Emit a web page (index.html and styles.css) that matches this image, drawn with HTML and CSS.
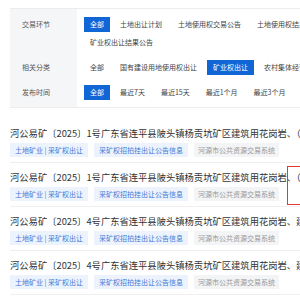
FILE: index.html
```html
<!DOCTYPE html>
<html lang="zh-CN">
<head>
<meta charset="utf-8">
<link rel="stylesheet" href="styles.css">
</head>
<body>
<div class="page">
  <div class="filter">
    <div class="frow first">
      <div class="flabel">交易环节</div>
      <div class="fopts">
        <span class="opt on">全部</span>
        <span class="opt">土地出让计划</span>
        <span class="opt">土地使用权交易公告</span>
        <span class="opt">土地使用权结果公示</span>
        <span class="opt">矿业权出让公告</span>
        <span class="opt">矿业权出让结果公告</span>
      </div>
    </div>
    <div class="frow">
      <div class="flabel">相关分类</div>
      <div class="fopts">
        <span class="opt">全部</span>
        <span class="opt">国有建设用地使用权出让</span>
        <span class="opt on">矿业权出让</span>
        <span class="opt">农村集体经营性建设用地</span>
      </div>
    </div>
    <div class="frow last">
      <div class="flabel">发布时间</div>
      <div class="fopts">
        <span class="opt on">全部</span>
        <span class="opt">最近7天</span>
        <span class="opt">最近15天</span>
        <span class="opt">最近1个月</span>
        <span class="opt">最近3个月</span>
      </div>
    </div>
  </div>

  <ul class="list">
    <li class="item">
      <div class="title">河公易矿〔2025〕1号广东省连平县陂头镇杨贡坑矿区建筑用花岗岩、（建筑用砂岩）采矿权出让公告</div>
      <div class="tags"><span class="tag blue">土地矿业 | 采矿权出让</span><span class="tag blue">采矿权招拍挂出让公告信息</span><span class="tag grey">河源市公共资源交易系统</span></div>
    </li>
    <li class="item">
      <div class="title">河公易矿〔2025〕1号广东省连平县陂头镇杨贡坑矿区建筑用花岗岩、（调整）采矿权出让公告</div>
      <div class="tags"><span class="tag blue">土地矿业 | 采矿权出让</span><span class="tag blue">采矿权招拍挂出让公告信息</span><span class="tag grey">河源市公共资源交易系统</span></div>
      <span class="mark"></span>
    </li>
    <li class="item">
      <div class="title">河公易矿〔2025〕4号广东省连平县陂头镇杨贡坑矿区建筑用花岗岩、建筑用砂岩采矿权出让公告</div>
      <div class="tags"><span class="tag blue">土地矿业 | 采矿权出让</span><span class="tag blue">采矿权招拍挂出让公告信息</span><span class="tag grey">河源市公共资源交易系统</span></div>
    </li>
    <li class="item">
      <div class="title">河公易矿〔2025〕4号广东省连平县陂头镇杨贡坑矿区建筑用花岗岩、建筑用砂岩采矿权出让公告</div>
      <div class="tags"><span class="tag blue">土地矿业 | 采矿权出让</span><span class="tag blue">采矿权招拍挂出让公告信息</span><span class="tag grey">河源市公共资源交易系统</span></div>
    </li>
  </ul>
</div>
</body>
</html>
```

FILE: styles.css
```css
html, body {
  margin: 0;
  padding: 0;
  overflow: hidden;
  background: #fff;
}
body {
  font-family: "Noto Sans CJK SC", "Noto Sans", sans-serif;
  color: #333;
}
.page {
  width: 560px;
  padding: 8px 0 0 10px;
}
.filter {
  width: 440px;
  border: 1px solid #ececec;
  border-left: none;
}
.frow {
  display: flex;
}
.flabel {
  width: 55px;
  flex: none;
  background: #f5f6f8;
  padding: 5px 0 5px 12px;
  font-size: 7px;
  line-height: 15px;
  color: #555;
}
.fopts {
  flex: 1;
  display: flex;
  flex-wrap: wrap;
  row-gap: 3px;
  padding: 5px 0 5px 7px;
}
.frow.first .flabel,
.frow.first .fopts { padding-top: 8px; }
.frow.last .flabel,
.frow.last .fopts { padding-bottom: 7px; }
.opt {
  font-size: 7px;
  line-height: 15px;
  height: 15px;
  padding: 0 6px;
  margin-right: 4px;
  color: #444;
  white-space: nowrap;
}
.opt.on {
  background: #1166d6;
  color: #fff;
}
.list {
  list-style: none;
  margin: 11px 0 0;
  padding: 0;
}
.item {
  position: relative;
  padding: 7px 0 5px;
  border-bottom: 1px solid #efefef;
}
.title {
  font-size: 9.3px;
  line-height: 14px;
  color: #333;
  white-space: nowrap;
  overflow: hidden;
}
.tags {
  display: flex;
  gap: 6px;
  margin-top: 3px;
}
.tag {
  font-size: 7px;
  line-height: 14px;
  height: 14px;
  padding: 0 5px;
  white-space: nowrap;
}
.tag.blue {
  background: #edf3fd;
  color: #3d7ad6;
}
.tag.grey {
  background: #f3f4f5;
  color: #999;
  padding: 0 4px;
}
.mark {
  position: absolute;
  left: 277px;
  top: 3px;
  width: 40px;
  height: 39px;
  border: 1px solid #e03a33;
  box-sizing: border-box;
}
```
